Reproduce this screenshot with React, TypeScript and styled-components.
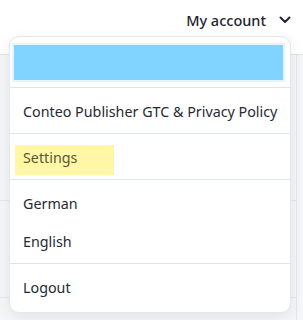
import React from "react";
import styled, { createGlobalStyle } from "styled-components";

const GlobalStyle = createGlobalStyle`
  html, body {
    margin: 0;
    padding: 0;
    background: #ffffff;
  }
  body {
    font-family: "Noto Sans", "Open Sans", Arial, sans-serif;
    color: #1f2430;
  }
`;

const menuSections = [
  ["Conteo Publisher GTC & Privacy Policy"],
  ["Settings"],
  ["German", "English"],
  ["Logout"],
];

export default function App() {
  return (
    <Page>
      <GlobalStyle />
      <Header>
        <AccountButton>
          My account
          <svg width="12" height="8" viewBox="0 0 12 8">
            <polyline
              points="1.5,1.5 6,6 10.5,1.5"
              fill="none"
              stroke="#1f2430"
              strokeWidth="2"
              strokeLinecap="round"
              strokeLinejoin="round"
            />
          </svg>
        </AccountButton>
      </Header>
      <BackPanel>
        <BackRow $h={145} />
        <BackRow $h={96} />
        <BackRow $h={30} />
      </BackPanel>

      <Dropdown>
        <UserSection>
          <UserBar />
        </UserSection>
        {menuSections.map((items, i) => (
          <Section key={i}>
            {items.map((label) => (
              <Item key={label} $highlight={label === "Settings"}>
                <span>{label}</span>
              </Item>
            ))}
          </Section>
        ))}
      </Dropdown>
    </Page>
  );
}

const Page = styled.div`
  position: relative;
  width: 303px;
  height: 320px;
  overflow: hidden;
  background: #f5f6f8;
`;

const Header = styled.div`
  height: 55px;
  background: #ffffff;
  border-bottom: 1px solid #e1e4ea;
  display: flex;
  justify-content: flex-end;
  align-items: flex-start;
  padding-right: 12px;
  box-sizing: border-box;
`;

const AccountButton = styled.div`
  display: flex;
  align-items: center;
  gap: 13px;
  margin-top: 10px;
  font-size: 14.5px;
  font-weight: 500;
  color: #1f2430;
`;

const BackPanel = styled.div`
  margin-right: 6px;
  border-right: 1px solid #e3e6eb;
`;

const BackRow = styled.div<{ $h: number }>`
  height: ${(p) => p.$h}px;
  border-bottom: 1px solid #e3e6eb;
`;

const Dropdown = styled.div`
  position: absolute;
  left: 9px;
  top: 36px;
  width: 282px;
  height: 277px;
  box-sizing: border-box;
  background: #ffffff;
  border: 1px solid #e4e7ec;
  border-radius: 10px;
  box-shadow: 0 4px 14px rgba(30, 40, 60, 0.09);
  overflow: hidden;
`;

const UserSection = styled.div`
  padding: 8px 7px 7px 4px;
  border-bottom: 1px solid #dfe3ea;
`;

const UserBar = styled.div`
  height: 35px;
  background: #80d4ff;
  box-shadow: 0 0 0 2px #e4f5fe;
`;

const Section = styled.div`
  padding: 4px 0 3px;
  border-bottom: 1px solid #dfe3ea;

  &:last-child {
    border-bottom: none;
  }
`;

const Item = styled.div<{ $highlight?: boolean }>`
  position: relative;
  height: 38px;
  display: flex;
  align-items: center;
  padding-left: 13px;
  font-size: 14.3px;
  color: ${(p) => (p.$highlight ? "#5a563a" : "#262a33")};

  span {
    position: relative;
  }

  ${(p) =>
    p.$highlight &&
    `
    &::before {
      content: "";
      position: absolute;
      left: 5px;
      top: 7px;
      width: 99px;
      height: 30px;
      background: #fff6a6;
    }
  `}
`;
